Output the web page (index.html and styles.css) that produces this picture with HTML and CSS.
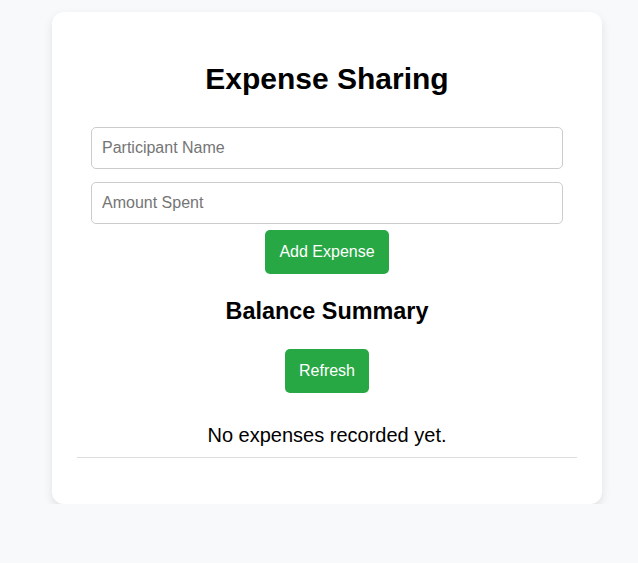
FILE: index.html
```html
<!DOCTYPE html>
<html>
<head>
<meta charset="utf-8">
<link rel="stylesheet" href="styles.css">
</head>
<body>
<div class="card">
  <h1 class="title">Expense Sharing</h1>
  <div class="form">
    <input class="field" type="text" placeholder="Participant Name">
    <input class="field" type="number" placeholder="Amount Spent">
    <button class="btn">Add Expense</button>
  </div>
  <h2 class="subtitle">Balance Summary</h2>
  <button class="btn">Refresh</button>
  <ul class="list">
    <li class="item">No expenses recorded yet.</li>
  </ul>
</div>
</body>
</html>
```
FILE: styles.css
```css
html, body {
  margin: 0;
  padding: 0;
  background: #f8f9fa;
  font-family: "Liberation Sans", Arial, sans-serif;
}
body {
  padding-top: 12px;
}
.card {
  box-sizing: border-box;
  width: 550px;
  margin-left: 52px;
  background: #fff;
  border-radius: 12px;
  box-shadow: 0 4px 10px rgba(0,0,0,0.1);
  padding: 20px 25px 46px;
  text-align: center;
}
.title {
  font-size: 30px;
  font-weight: bold;
  margin: 30px 0 31px;
  color: #000;
}
.form {
  display: flex;
  flex-direction: column;
  align-items: center;
  gap: 13px;
}
.field {
  box-sizing: border-box;
  width: 472px;
  height: 42px;
  padding: 10px;
  font-size: 16px;
  font-family: "Liberation Sans", Arial, sans-serif;
  border: 1px solid #ccc;
  border-radius: 5px;
  color: #333;
}
.field::placeholder {
  color: #757575;
}
.btn {
  background: #28a745;
  color: #fff;
  border: none;
  border-radius: 5px;
  padding: 13px 14px;
  font-size: 16px;
  font-family: "Liberation Sans", Arial, sans-serif;
  line-height: 18px;
  cursor: pointer;
}
.form .btn {
  margin-top: -7px;
}
.subtitle {
  font-size: 23.4px;
  font-weight: bold;
  margin: 24px 0 24px;
}
.list {
  list-style: none;
  margin: 30px 0 0;
  padding: 0;
}
.item {
  font-size: 20px;
  line-height: 23px;
  padding: 10px 0 10px;
  border-bottom: 1px solid #ddd;
  margin-top: -9px;
}
```
